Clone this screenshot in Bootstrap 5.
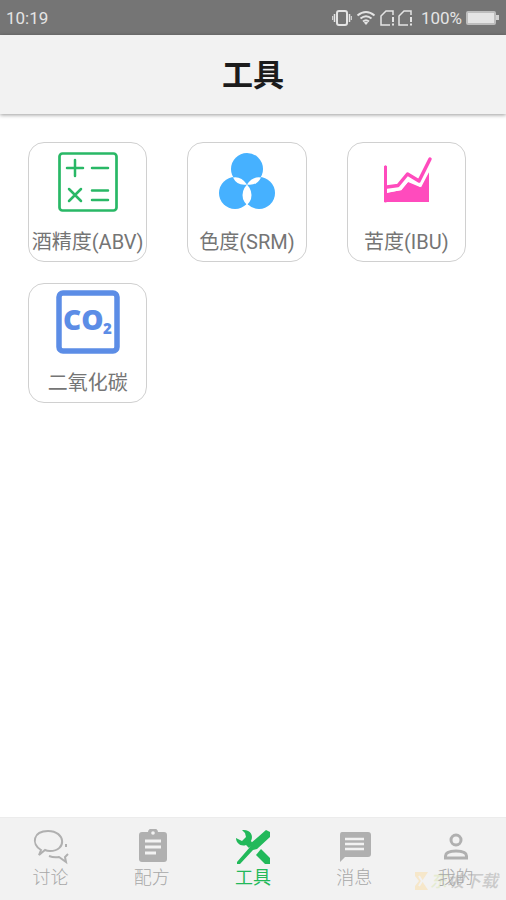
<!DOCTYPE html>
<html lang="zh-CN">
<head>
<meta charset="utf-8">
<meta name="viewport" content="width=device-width, initial-scale=1">
<title>工具</title>
<link href="https://cdn.jsdelivr.net/npm/bootstrap@5.3.0/dist/css/bootstrap.min.css" rel="stylesheet">
<style>
body { font-family: Roboto, "Noto Sans CJK SC", sans-serif; }
.status-bar { height: 35px; padding: 1px 7px 0 6px; background: #757575; color: #e4e4e4; font-size: 17px; line-height: 32px; }
.status-icons { gap: 4px; }
.title-bar { height: 79px; padding-top: 2px; background: #f2f2f2; box-shadow: 0 1px 4px rgba(0,0,0,.4); }
.title-bar h1 { font-size: 31px; line-height: 40px; color: #1c1c1c; font-weight: 700; }
.tool-grid { grid-template-columns: repeat(3, 1fr); column-gap: 40px; row-gap: 21px; padding: 28px 40px 28px 28px; }
.tool { height: 120px; padding: 5px 0 0; border: 1px solid #d0d0d0; border-radius: 16px; background: #fff; color: #757575; font-size: 20px; line-height: 28px; white-space: nowrap; }
.tool svg { width: 68px; height: 68px; margin-bottom: 12px; }
.tab-bar { height: 83px; background: #f2f2f2; border-top: 1px solid #ececec; }
.tab { z-index: 1; padding: 11px 0 0; border: 0; background: none; color: #a8a8a8; font-size: 18px; line-height: 24px; font-weight: 300; }
.tab.active { color: #22b95a; font-weight: 400; }
.tab svg { width: 36px; height: 36px; margin-bottom: 1px; }
.stamp { right: 8px; bottom: 7px; pointer-events: none; font-size: 17px; line-height: 24px; color: #b0b0b0; opacity: .6; font-style: italic; font-weight: 500; }
.stamp .tint { color: #dde8bd; }
</style>
<script src="https://cdn.jsdelivr.net/npm/bootstrap@5.3.0/dist/js/bootstrap.bundle.min.js"></script>
</head>
<body class="d-flex flex-column min-vh-100 bg-white">
<div class="status-bar d-flex justify-content-between align-items-center">
  <span>10:19</span>
  <div class="status-icons d-flex align-items-center">
    <svg width="20" height="18" viewBox="0 0 20 18" fill="none" stroke="#e4e4e4"><rect x="5" y="2" width="10" height="14" rx="2" stroke-width="2"/><path d="M2.500 5v8M17.500 5v8" stroke-width="1.500"/><path d="M.7 7v4M19.300 7v4"/></svg>
    <svg width="20" height="18" viewBox="0 0 20 18" fill="none" stroke="#e4e4e4" stroke-width="2"><path d="M1.500 6.500Q10-.5 18.500 6.500M4.500 9.500q5.500-4.500 11 0M7 12.500q3-2.500 6 0"/><path d="M7.800 13.500 10 16l2.200-2.500Q10 12 7.800 13.500Z" fill="#e4e4e4" stroke="none"/></svg>
    <svg width="33" height="18" viewBox="0 0 33 18" fill="none" stroke="#e4e4e4" stroke-width="1.500"><g id="sim"><path d="M10 16H1V7l5-5h7v4"/><path d="M13 8v5M13 14.500v2" stroke-width="2"/></g><use href="#sim" x="18"/></svg>
    <span class="ps-1">100%</span>
    <svg width="33" height="18" viewBox="0 0 33 18"><rect x="1" y="3" width="28" height="12" rx="1" fill="#e4e4e4" stroke="#bdbdbd" stroke-width="2"/><path d="M30 6h3v5h-3z" fill="#d0d0d0"/></svg>
  </div>
</div>
<header class="title-bar d-flex align-items-center justify-content-center"><h1 class="m-0">工具</h1></header>
<main class="flex-grow-1">
  <div class="tool-grid d-grid">
    <button type="button" class="tool d-flex flex-column align-items-center">
      <svg viewBox="0 0 68 68" fill="none" stroke="#29b866"><rect x="5.500" y="5.500" width="57" height="57" rx="3" stroke-width="2.700"/><path d="M13 20h16M21 12v16M38 20h16M38 42.500h16M38 52h16M15 41l12 12M27 41 15 53" stroke-width="2.500" stroke-linecap="round"/></svg>
      <span>酒精度(ABV)</span>
    </button>
    <button type="button" class="tool d-flex flex-column align-items-center">
      <svg viewBox="0 0 68 68"><g fill="#46b1ff"><circle cx="34" cy="21" r="16"/><circle cx="22" cy="45" r="16"/><circle cx="46" cy="45" r="16"/></g><g fill="#fff"><path d="M34 36.500Q40 43 38 51Q37 54 34 57Q31 54 30 51Q28 43 34 36.500Z"/><path d="M20 29.500Q28 28 34 36.500Q24 38 20 29.500Z"/><path d="M48 29.500Q40 28 34 36.500Q44 38 48 29.500Z"/></g></svg>
      <span>色度(SRM)</span>
    </button>
    <button type="button" class="tool d-flex flex-column align-items-center">
      <svg viewBox="0 0 68 68"><path d="M12 54V18.500Q13.500 16.500 15 18.500V45l14-3 7-8 12 5 9-16V54Z" fill="#ff4bbd"/><path d="M15 42l13-2 8-10 12 6L60 13" fill="none" stroke="#fff" stroke-width="5"/><path d="M15 39l11-1.500L35.500 26 47 33 58 11" fill="none" stroke="#ff4bbd" stroke-width="3.500" stroke-linecap="round" stroke-linejoin="round"/><path d="M13.500 19v34" stroke="#ff4bbd" stroke-width="3" stroke-linecap="round"/></svg>
      <span>苦度(IBU)</span>
    </button>
    <button type="button" class="tool d-flex flex-column align-items-center">
      <svg viewBox="0 0 68 68"><rect x="5" y="4" width="58" height="58" rx="4" fill="none" stroke="#5c8de6" stroke-width="5.500"/><g fill="#5c8de6" font-family="Open Sans" font-weight="800"><text x="9" y="41" font-size="28">CO</text><text x="49" y="45" font-size="15">2</text></g></svg>
      <span>二氧化碳</span>
    </button>
  </div>
</main>
<nav class="tab-bar d-flex position-relative">
  <button type="button" class="tab flex-fill d-flex flex-column align-items-center w-100">
    <svg viewBox="0 0 36 36" fill="none" stroke="#b0b0b0" stroke-width="2"><path d="M8 21C-2 15 0 2 15 2c18 0 19 20 2 20q-3 0-5-1l-6 5Z"/><path d="M16 27q5 2 10 1l7 5-1-5 3-3M33 15v3"/></svg>
    <span>讨论</span>
  </button>
  <button type="button" class="tab flex-fill d-flex flex-column align-items-center w-100">
    <svg viewBox="0 0 36 36"><path d="M8 3h6a5 4 0 0 1 10 0h6q3 0 3 3v24q0 3-3 3H8q-3 0-3-3V6q0-3 3-3Z" fill="#b0b0b0"/><circle cx="19" cy="4" r="1.800" fill="#f2f2f2"/><path d="M11 12h16M11 18h16M11 24h11" stroke="#f2f2f2" stroke-width="2.800"/></svg>
    <span>配方</span>
  </button>
  <button type="button" class="tab active flex-fill d-flex flex-column align-items-center w-100" aria-current="page">
    <svg viewBox="0 0 36 36" fill="#22b95a"><path d="M7 1c8-1 12 5 9 11l2 3-4 4-3-3C6 18 1 14 1 9l6 3 4-4-1-4Z"/><path d="M31 1l4 2v5L22 20l-4 1L5 35H2v-2l13-15 1-4Z"/><path d="M26 20l9 9v6h-5l-9-9Z"/></svg>
    <span>工具</span>
  </button>
  <button type="button" class="tab flex-fill d-flex flex-column align-items-center w-100">
    <svg viewBox="0 0 36 36"><path d="M6 3h26q3 0 3 3v19q0 3-3 3H9l-5 5V6q0-3 2-3Z" fill="#b0b0b0"/><path d="M9 10h19M9 15h19M9 20h19" stroke="#f2f2f2" stroke-width="2.500"/></svg>
    <span>消息</span>
  </button>
  <button type="button" class="tab flex-fill d-flex flex-column align-items-center w-100">
    <svg viewBox="0 0 36 36" fill="none" stroke="#b0b0b0" stroke-width="3"><circle cx="19" cy="11" r="5"/><path d="M8.500 29v-2q0-5 10.500-5t10.500 5v2Z"/></svg>
    <span>我的</span>
  </button>
  <div class="stamp position-absolute d-flex align-items-center" aria-hidden="true">
    <svg width="16" height="20" viewBox="0 0 16 20"><path d="M1 1h13L8 10l6 9H1V15l4-5-4-5Z" fill="#fae0b0"/><path d="M5 5l3 5-3 5" stroke="#f2f2f2" stroke-width="2" fill="none"/></svg>
    <span class="tint">东</span><span>坡下载</span>
  </div>
</nav>
</body>
</html>
